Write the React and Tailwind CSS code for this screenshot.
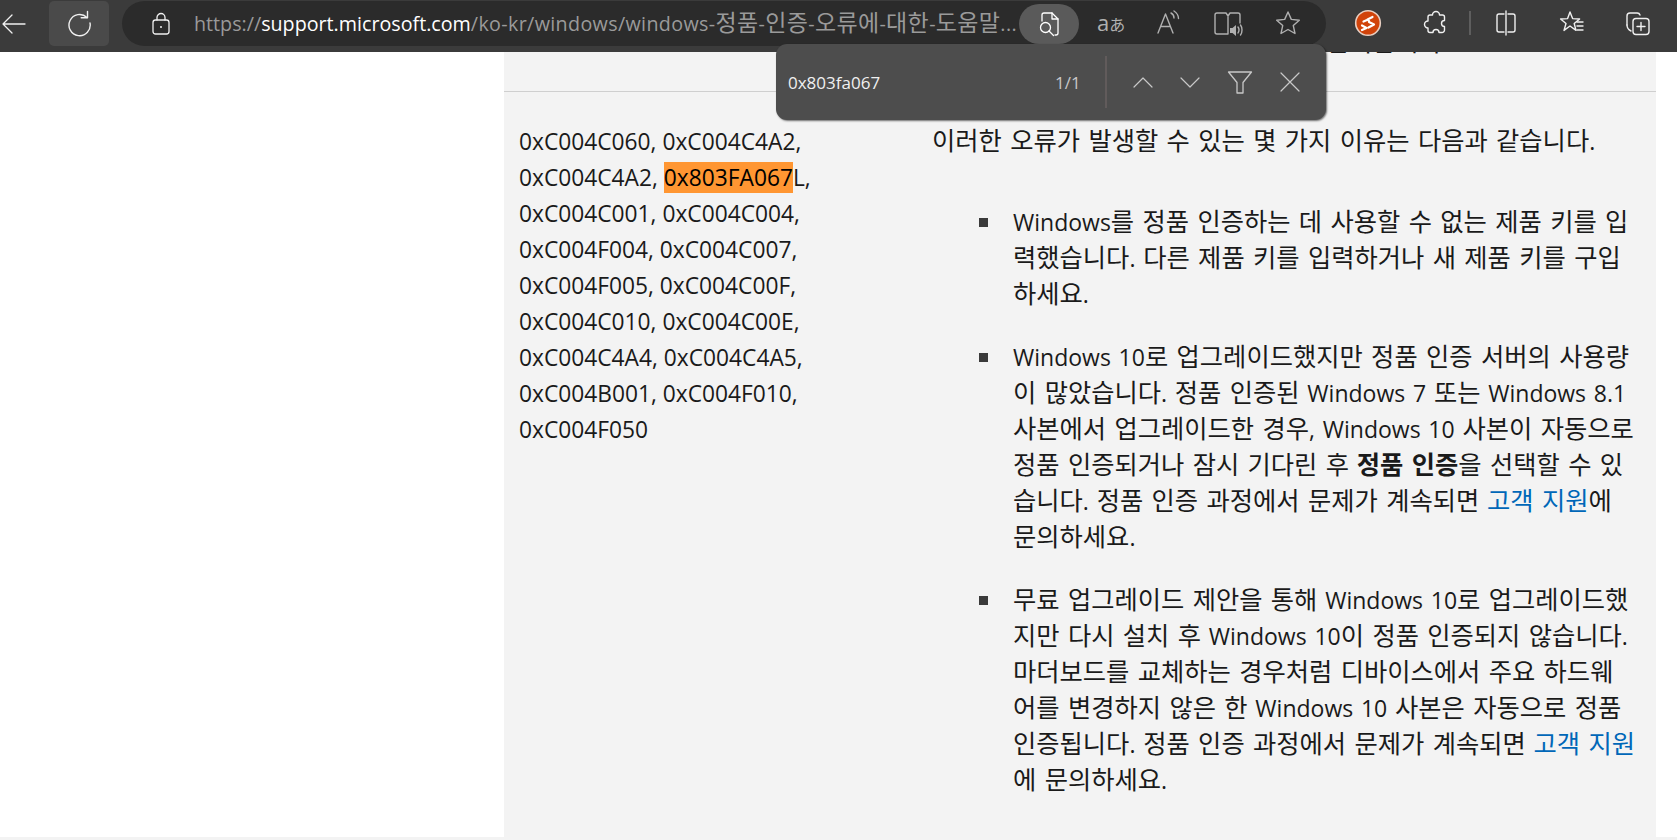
import React from "react";

const FONT = { fontFamily: '"Open Sans","Noto Sans CJK KR",sans-serif' };

const S = ({ children, className = "", w = 28, h = 28, vb = "0 0 28 28", sw = 1.4 }) => (
  <svg width={w} height={h} viewBox={vb} fill="none" stroke="currentColor" strokeWidth={sw} strokeLinecap="round" strokeLinejoin="round" className={className}>
    {children}
  </svg>
);

/* Hangul runs sit on a larger size than the Latin runs, as in the reference's system font */
function T({ children, big = "text-[25.3px] leading-none" }) {
  const parts = String(children).split(/([\uAC00-\uD7A3]+(?: [\uAC00-\uD7A3]+)*)/);
  return parts.map((p, i) =>
    /[\uAC00-\uD7A3]/.test(p) ? (
      <span key={i} className={big}>{p}</span>
    ) : (
      <React.Fragment key={i}>{p}</React.Fragment>
    )
  );
}

const U = ({ children }) => <T big="text-[23px] leading-none">{children}</T>;

function Bullet({ children }) {
  return (
    <li className="relative mb-[27px] whitespace-nowrap pl-[34px]">
      <span className="absolute left-0 top-[14px] h-[9px] w-[9px] bg-[#3a3a3a]" />
      {children}
    </li>
  );
}

const A = ({ children }) => (
  <span className="text-[#0067b8]">
    <T>{children}</T>
  </span>
);

const Codes = [
  "0xC004C001, 0xC004C004,",
  "0xC004F004, 0xC004C007,",
  "0xC004F005, 0xC004C00F,",
  "0xC004C010, 0xC004C00E,",
  "0xC004C4A4, 0xC004C4A5,",
  "0xC004B001, 0xC004F010,",
  "0xC004F050",
];

export default function App() {
  return (
    <div className="relative h-[840px] w-full overflow-hidden bg-white text-[#1a1a1a]" style={FONT}>
      {/* browser toolbar */}
      <header className="relative z-20 flex h-[52px] items-start bg-[#3b3b3b] text-[#f0f0f0]">
        <div className="flex h-[48px] w-[49px] items-center pl-[1px]">
          <S w={26} h={26} vb="0 0 26 26" sw={1.3}><path d="M24 13H2M11 4l-9 9 9 9" /></S>
        </div>
        <div className="mt-[1px] flex h-[45px] w-[60px] items-center justify-center rounded-[5px] bg-[#4a4a4a]">
          <S className="-mt-[2px]"><path d="M22 8.500A10.600 10.600 0 1 0 25 14" /><path d="M22.500 2.500v6.300h-6.300" /></S>
        </div>
        <div className="ml-[13px] mt-[1px] flex h-[45px] w-[1204px] items-center rounded-full bg-[#2b2b2b]">
          <div className="ml-[29px] text-[#f0f0f0]">
            <S w={20} h={24} vb="0 0 20 24" sw={1.3}><rect x="2" y="8" width="16" height="14" rx="2.500" /><path d="M6 8V5.500a4 4 0 0 1 8 0V8" /><circle cx="10" cy="15" r="1" fill="currentColor" stroke="none" /></S>
          </div>
          <div className="ml-[23px] w-[825px] whitespace-nowrap text-[19.7px] text-[#9a9a9a]">
            https://<span className="text-white">support.microsoft.com</span><span className="tracking-[0.35px]">/ko-kr/windows/windows-<U>정품</U>-<U>인증</U>-<U>오류에</U>-<U>대한</U>-<U>도움말</U>...</span>
          </div>
          <div className="flex h-[40px] w-[60px] items-center justify-center rounded-full bg-[#5a5a5a] text-white">
            <S w={24} h={28} vb="0 0 24 28" sw={1.3}>
              <path d="M5 11V5a2 2 0 0 1 2-2h8l6 6v14a2 2 0 0 1-2 2h-1" />
              <path d="M15 3v6h6" />
              <circle cx="8.500" cy="17.500" r="5" />
              <path d="M12 21l4.500 4.500" />
            </S>
          </div>
          <div className="flex w-[212px] items-center text-[#b0b0b0]">
            <span className="-mt-[4px] ml-[18px] w-[62px] whitespace-nowrap text-[22px] leading-none">a<span className="text-[16px]">あ</span></span>
          </div>
        </div>
        <div className="ml-auto flex h-[46px] items-center pr-[25px] text-[#f0f0f0]">
          <svg width="28" height="28" viewBox="0 0 28 28" className="mr-[40px]">
            <circle cx="14" cy="14" r="12.300" fill="#d1430a" stroke="#e8cfc2" strokeWidth="1.600" />
            <path d="M18.500 8l-5 2.500 1.500 1.500M9.500 12.500l3.500-1.500" stroke="#fff" strokeWidth="2.200" fill="none" strokeLinecap="round" strokeLinejoin="round" />
            <path d="M8 16.500l4.500 2.500-4.500 2M15 13l5 2.500-5.500 3" stroke="#fff" strokeWidth="2.200" fill="none" strokeLinecap="round" strokeLinejoin="round" />
          </svg>
          <div className="mr-[19px]">
            <S><path d="M10.500 6a3.500 3.500 0 0 1 7 0h3a2 2 0 0 1 2 2v3.500a3 3 0 0 0 0 6V21a2.500 2.500 0 0 1-2.500 2.500H17a3 3 0 0 0-6 0H8a2 2 0 0 1-2-2V19a3.500 3.500 0 0 1 0-7V8a2 2 0 0 1 2-2z" /></S>
          </div>
          <div className="mr-[21px] h-[24px] w-[2px] bg-[#5e5e5e]" />
          <div className="mr-[38px]">
            <S><path d="M12 5H7a2 2 0 0 0-2 2v14a2 2 0 0 0 2 2h5M16 5h5a2 2 0 0 1 2 2v14a2 2 0 0 1-2 2h-5M14 2v24" /></S>
          </div>
          <div className="mr-[38px]">
            <S><path d="M12 3l2.600 6.600 7 .4-5.400 4.500 1.800 6.900L12 17l-6 4.400 2-6.900L2.600 10l7-.4z" /><path d="M19 13h6M19 17h6M19 21h6" /></S>
          </div>
          <div>
            <S><path d="M3 16V7a3 3 0 0 1 3-3h7a3 3 0 0 1 3 2" /><path d="M3 16c0 3 2 5 4 6" /><rect x="9" y="9.500" width="16" height="16" rx="3" /><path d="M17 13.500v8M13 17.500h8" /></S>
          </div>
        </div>
      </header>

      {/* icons inside the address bar, to the right of the page-tool pill */}
      <div className="absolute left-[1154px] top-[9px] z-30 flex items-center text-[#b0b0b0]">
        <div className="mr-[31px]">
          <S><path d="M4 24L11.500 5l7.500 19M7 17.500h9" /><path d="M17 4c2 1 3 3 3 5M20 2c3 2 4.500 4.500 4.500 7.500" /></S>
        </div>
        <div className="mr-[31px]">
          <S w={30} h={28} vb="0 0 30 28"><path d="M15 8V25H4a2 2 0 0 1-2-2V6a2 2 0 0 1 2-2h9l2 3 2-3h8a2 2 0 0 1 2 2v8" /><path d="M17 19h2.500l3.500-3v11l-3.500-3H17z" fill="currentColor" stroke="none" /><path d="M25 18c1.200 1.500 1.200 4 0 6M27.500 16c2 2.500 2 7.500 0 10" /></S>
        </div>
        <S><path d="M14 3l3.300 7.400 8 .8-6 5.400 1.700 7.900L14 20.500l-7 4 1.700-7.900-6-5.400 8-.8z" /></S>
      </div>

      {/* find in page bar */}
      <div className="absolute left-[776px] top-[44px] z-30 flex h-[76px] w-[550px] items-center rounded-[11px] bg-[#4d4d4d] text-[#f0f0f0] shadow-[1px_1px_2px_rgba(0,0,0,0.55)]">
        <span className="ml-[12px] w-[267px] pt-[1px] text-[17px]">0x803fa067</span>
        <span className="w-[50px] pt-[1px] text-[17px] text-[#c8c8c8]">1/1</span>
        <div className="h-[52px] w-[2px] bg-[#615b5b]" />
        <div className="ml-[23px] flex items-center text-[#c8c8c8]">
          <S w={26} h={26} vb="0 0 26 26" sw={1.2} className="mr-[21px]"><path d="M4 18l9-9 9 9" /></S>
          <S w={26} h={26} vb="0 0 26 26" sw={1.2} className="mr-[23px]"><path d="M4 9l9 9 9-9" /></S>
          <S w={28} h={28} vb="0 0 28 28" sw={1.3} className="mr-[23px]"><path d="M2.500 4h23L17 14.500V25h-6V14.500z" /></S>
          <S w={26} h={26} vb="0 0 26 26" sw={1.2}><path d="M4 4l18 18M22 4L4 22" /></S>
        </div>
      </div>

      {/* page */}
      <main className="flex h-[785px]">
        <div className="w-[504px] shrink-0 bg-white" />
        <div className="w-[1152px] shrink-0 bg-[#f3f3f3]">
          <div className="h-[40px] overflow-hidden border-b border-[#cfcfcf] pr-[214px] text-right text-[23px] leading-[36px] [word-spacing:1.8px]">
            <p className="-mt-[28px] whitespace-nowrap"><T>제품 키를 입력합니다</T></p>
          </div>
          <div className="flex">
            <div className="ml-[15px] mt-[32px] w-[413px] text-[22.75px] leading-[36px]">
              0xC004C060, 0xC004C4A2,<br />
              0xC004C4A2, <span className="bg-[#ff9632] text-black">0x803FA067</span>L,<br />
              {Codes.map((c) => (
                <React.Fragment key={c}>{c}<br /></React.Fragment>
              ))}
            </div>
            <div className="mt-[31px] text-[23px] leading-[36px] [word-spacing:1.8px]">
              <p className="whitespace-nowrap"><T>이러한 오류가 발생할 수 있는 몇 가지 이유는 다음과 같습니다.</T></p>
              <ul className="ml-[47px] mt-[45px]">
                <Bullet>
                  <T>Windows를 정품 인증하는 데 사용할 수 없는 제품 키를 입</T><br />
                  <T>력했습니다. 다른 제품 키를 입력하거나 새 제품 키를 구입</T><br />
                  <T>하세요.</T>
                </Bullet>
                <Bullet>
                  <T>Windows 10로 업그레이드했지만 정품 인증 서버의 사용량</T><br />
                  <T>이 많았습니다. 정품 인증된 Windows 7 또는 Windows 8.1</T><br />
                  <T>사본에서 업그레이드한 경우, Windows 10 사본이 자동으로</T><br />
                  <T>정품 인증되거나 잠시 기다린 후 </T><b><T>정품 인증</T></b><T>을 선택할 수 있</T><br />
                  <T>습니다. 정품 인증 과정에서 문제가 계속되면 </T><A>고객 지원</A><T>에</T><br />
                  <T>문의하세요.</T>
                </Bullet>
                <Bullet>
                  <T>무료 업그레이드 제안을 통해 Windows 10로 업그레이드했</T><br />
                  <T>지만 다시 설치 후 Windows 10이 정품 인증되지 않습니다.</T><br />
                  <T>마더보드를 교체하는 경우처럼 디바이스에서 주요 하드웨</T><br />
                  <T>어를 변경하지 않은 한 Windows 10 사본은 자동으로 정품</T><br />
                  <T>인증됩니다. 정품 인증 과정에서 문제가 계속되면 </T><A>고객 지원</A><br />
                  <T>에 문의하세요.</T>
                </Bullet>
              </ul>
            </div>
          </div>
        </div>
      </main>
      <div className="h-[3px] bg-[#f3f3f3]" />
    </div>
  );
}
